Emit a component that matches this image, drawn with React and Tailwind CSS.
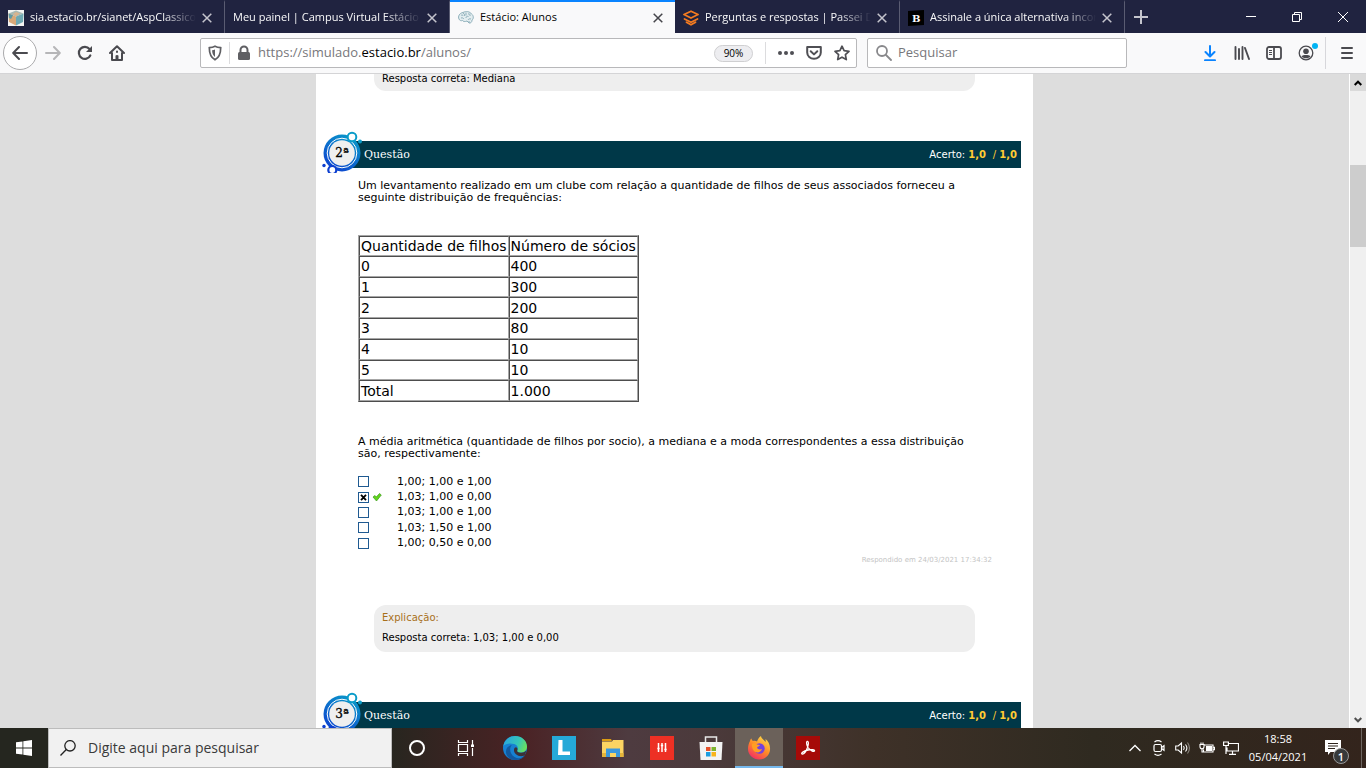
const tabs = [
  { title: "sia.estacio.br/sianet/AspClassico", icon: "cube" },
  { title: "Meu painel | Campus Virtual Estácio" },
  { title: "Estácio: Alunos", icon: "brain", active: true },
  { title: "Perguntas e respostas | Passei Direto", icon: "passei" },
  { title: "Assinale a única alternativa incorreta", icon: "brainly" },
];

const rows = [
  ["0", "400"],
  ["1", "300"],
  ["2", "200"],
  ["3", "80"],
  ["4", "10"],
  ["5", "10"],
  ["Total", "1.000"],
];

const options = [
  { text: "1,00; 1,00 e 1,00" },
  { text: "1,03; 1,00 e 0,00", checked: true },
  { text: "1,03; 1,00 e 1,00" },
  { text: "1,03; 1,50 e 1,00" },
  { text: "1,00; 0,50 e 0,00" },
];

const favicons = {
  cube: (
    <svg className="h-4 w-4 shrink-0" viewBox="0 0 16 16">
      <path fill="#f4f4f2" d="M0 0h16v16H0z" />
      <path fill="#a8b9b4" d="M8 0.5l7.5 3L8 6.5.5 3.5z" />
      <path fill="#d9a878" d="M.5 3.5L8 6.5v9L1 12z" />
      <path fill="#6fa9b3" d="M15.5 3.5L8 6.5v9l7-3.5z" />
      <path fill="#5f9aa6" d="M.5 3.5L5 5.3 3 9 1 8z" />
      <path fill="#d8b48f" d="M8 2l4 1.5L8 6.500 5 4z" />
    </svg>
  ),
  brain: (
    <svg className="h-4 w-4 shrink-0" viewBox="0 0 16 16" fill="none" stroke="#8fb0bb" strokeWidth="1">
      <path fill="#e3edf0" d="M1 9C-.3 6.500 1.500 3 5 2.500 8 .8 12 1.500 13.500 4c2.300 1.300 2.300 5 .5 6 .2 2-1.500 3.500-3 3L9 11c-2 1-4 .5-4.500-.5C3 11 1.500 10.500 1 9z" />
      <path d="M3 5.500c1-1 2-.5 2 .5M5 3.500c1.500 0 2 1 1.500 2.500M8 2.500v3M3 8c1.500-.5 2 0 3 1M8 8c0-1.500 1-2 2.500-1.500M10 4c1.500-.5 2.500.5 2 2M10 10c.5-1 1.500-1.500 3-1M11 11v2" />
    </svg>
  ),
  passei: (
    <svg className="h-4 w-4 shrink-0" viewBox="0 0 16 16" fill="none" stroke="#f47b20" strokeWidth="1.800" strokeLinejoin="round" strokeLinecap="round">
      <path d="M8 1.200L15 4.500 8 8 1 4.500z" />
      <path d="M1.500 9L8 12.200 14.500 9M3.500 12.200L8 14.800l4.500-2.600" />
    </svg>
  ),
  brainly: (
    <svg className="h-4 w-4 shrink-0" viewBox="0 0 16 16">
      <path fill="#000" d="M0 1L16 0v15L0 16z" />
      <text x="4" y="12" fontSize="10" fontWeight="bold" fontFamily="DejaVu Serif, serif" fill="#fff">B</text>
    </svg>
  ),
};

const Cross = ({ className }) => (
  <svg className={className} viewBox="0 0 10 10" fill="none" stroke="currentColor" strokeWidth="1.500">
    <path d="M.7.7l8.600 8.600M9.300.7L.7 9.300" />
  </svg>
);

const Tab = ({ title, icon, active }) => (
  <div
    className={
      active
        ? "flex h-full min-w-0 max-w-[225px] flex-1 items-center gap-1.5 border-t-2 border-[#0a84ff] bg-[#f9f9fa] pr-3 pl-2 text-black"
        : "flex h-full min-w-0 max-w-[225px] flex-1 items-center gap-1.5 border-t-2 border-r border-t-transparent border-r-[#5a5c72] pr-3 pl-2 text-[#f9f9fa]"
    }
  >
    {icon && favicons[icon]}
    <span
      className={
        active
          ? "flex-1 overflow-hidden whitespace-nowrap"
          : "flex-1 overflow-hidden mask-r-from-80% whitespace-nowrap"
      }
    >
      {title}
    </span>
    <button aria-label="Fechar aba">
      <Cross className={active ? "h-2.5 w-2.5 text-[#45454a]" : "h-2.5 w-2.5 text-[#c5c5cd]"} />
    </button>
  </div>
);

const TabBar = () => (
  <div className="flex h-[33px] shrink-0 items-center bg-[#202340] font-['Open_Sans',sans-serif] text-[11px]">
    {tabs.map((tab) => (
      <Tab key={tab.title} {...tab} />
    ))}
    <button aria-label="Nova aba" className="flex w-8 justify-center">
      <svg className="h-4 w-4" viewBox="0 0 16 16" stroke="#c5c5cd" strokeWidth="2">
        <path d="M8 1v14M1 8h14" />
      </svg>
    </button>
    <div className="ml-auto flex text-white">
      <button aria-label="Minimizar" className="flex w-[46px] justify-center">
        <svg className="h-2.5 w-2.5" viewBox="0 0 10 10" stroke="currentColor"><path d="M0 4.500h10" /></svg>
      </button>
      <button aria-label="Restaurar" className="flex w-[46px] justify-center">
        <svg className="h-2.5 w-2.5" viewBox="0 0 10 10" fill="none" stroke="currentColor">
          <path d="M.5 2.500h7v7h-7zM2.500 2.500v-2h7v7h-2" />
        </svg>
      </button>
      <button aria-label="Fechar" className="flex w-[46px] justify-center">
        <svg className="h-2.5 w-2.5" viewBox="0 0 10 10" stroke="currentColor"><path d="M0 0l10 10M10 0L0 10" /></svg>
      </button>
    </div>
  </div>
);

const Toolbar = () => (
  <div className="flex h-[41px] shrink-0 items-center border-b border-[#d4d4d6] bg-[#f9f9fa] pr-[11px] pl-[3px] font-['Open_Sans',sans-serif] text-[#4a4a4f]">
    <button aria-label="Voltar" className="flex h-[34px] w-[34px] items-center justify-center rounded-full border border-[#aaaaac] bg-white">
      <svg className="h-4 w-4" viewBox="0 0 16 16" fill="none" stroke="currentColor" strokeWidth="2" strokeLinecap="round" strokeLinejoin="round">
        <path d="M15 8H1.500M7 2L1.200 8 7 14" />
      </svg>
    </button>
    <button aria-label="Avançar" className="ml-2 text-[#b6b6b8]">
      <svg className="h-4 w-4" viewBox="0 0 16 16" fill="none" stroke="currentColor" strokeWidth="2" strokeLinecap="round" strokeLinejoin="round">
        <path d="M1 8h13.500M9 2l5.800 6L9 14" />
      </svg>
    </button>
    <button aria-label="Recarregar" className="ml-4">
      <svg className="h-4 w-4" viewBox="0 0 16 16" fill="none" stroke="currentColor" strokeWidth="2.200" strokeLinecap="round">
        <path d="M13.300 10.500A6 6 0 1 1 12.500 4" />
        <path d="M15 1v6H9z" fill="currentColor" stroke="none" />
      </svg>
    </button>
    <button aria-label="Página inicial" className="ml-4">
      <svg className="h-4 w-4" viewBox="0 0 16 16" fill="none" stroke="currentColor" strokeWidth="2" strokeLinecap="round" strokeLinejoin="round">
        <path d="M1 8l7-6.800L15 8M3 8v7h10V8" />
        <path d="M6.500 15v-4.500h3V15z" fill="currentColor" stroke="none" />
        <path d="M8 6.500v.5M8 11v3" />
      </svg>
    </button>

    <div className="ml-[75px] flex h-[30px] flex-1 items-center rounded-xs border border-[#b8b8ba] bg-white px-1.5">
      <svg className="h-4 w-4" viewBox="0 0 16 16" fill="none" stroke="#5f5f63" strokeWidth="1.700">
        <path d="M8 1.200C6.500 2 4.500 2.500 2.300 2.700c0 5.300 1.200 9.600 5.700 12 4.500-2.400 5.700-6.700 5.700-12C11.500 2.500 9.500 2 8 1.200z" />
        <path d="M8 4.500v7.500C5.800 10.400 5.200 8 5.100 5.300 6.200 5.200 7.200 4.900 8 4.500z" fill="#5f5f63" stroke="none" />
      </svg>
      <span className="ml-1.5 h-[22px] w-px bg-[#dcdcde]" />
      <svg className="ml-1.5 h-4 w-4" viewBox="0 0 16 16" fill="none" stroke="#5f5f63" strokeWidth="2">
        <path d="M4.500 8V5a3.500 3.500 0 0 1 7 0v3" />
        <rect x="2" y="7" width="12" height="8" rx="1.500" fill="#5f5f63" stroke="none" />
      </svg>
      <a href="https://simulado.estacio.br/alunos/" className="ml-1.5 text-[13px] text-[#77777b]">
        https://simulado.<span className="text-black">estacio.br</span>/alunos/
      </a>
      <button className="ml-auto h-[17px] w-[39px] rounded-full border border-[#cfcfd1] bg-[#ededf0] text-[10px] leading-[15px] text-black">90%</button>
      <span className="ml-3 h-[22px] w-px bg-[#dcdcde]" />
      <button aria-label="Ações da página" className="ml-3">
        <svg className="h-4 w-4" viewBox="0 0 16 16" fill="#4f4f54">
          <circle cx="2" cy="8" r="2" /><circle cx="8" cy="8" r="2" /><circle cx="14" cy="8" r="2" />
        </svg>
      </button>
      <button aria-label="Salvar no Pocket" className="ml-3">
        <svg className="h-4 w-4" viewBox="0 0 16 16" fill="none" stroke="#4f4f54" strokeWidth="2" strokeLinecap="round" strokeLinejoin="round">
          <path d="M1.200 2h13.600v5.500a6.800 6.300 0 0 1-13.600 0z" /><path d="M4.700 6.200L8 9.400l3.300-3.200" />
        </svg>
      </button>
      <button aria-label="Favoritar" className="ml-3">
        <svg className="h-4 w-4" viewBox="0 0 16 16" fill="none" stroke="#4f4f54" strokeWidth="1.700" strokeLinejoin="round">
          <path d="M8 1.200l2.100 4.500 4.900.6-3.600 3.400.9 4.900L8 12.200l-4.300 2.400.9-4.900L1 6.300l4.900-.6z" />
        </svg>
      </button>
    </div>

    <label className="ml-2.5 flex h-[30px] w-[260px] items-center gap-1.5 rounded-xs border border-[#b8b8ba] bg-white px-2">
      <svg className="h-4 w-4 shrink-0" viewBox="0 0 16 16" fill="none" stroke="#88888b" strokeWidth="1.800" strokeLinecap="round">
        <circle cx="6" cy="6" r="5" /><path d="M10 10l5 5" />
      </svg>
      <input aria-label="Pesquisar" placeholder="Pesquisar" className="w-full min-w-0 bg-transparent text-[13px] outline-none placeholder:text-[#77777b]" />
    </label>

    <div className="ml-[75px] flex items-center gap-4">
      <button aria-label="Downloads">
        <svg className="h-4 w-4" viewBox="0 0 16 16" fill="none" stroke="#0a84ff" strokeWidth="2" strokeLinecap="round" strokeLinejoin="round">
          <path d="M8 1v10M3.500 7L8 11.500 12.500 7M3 15.200h10" />
        </svg>
      </button>
      <button aria-label="Biblioteca">
        <svg className="h-4 w-4" viewBox="0 0 16 16" stroke="currentColor" strokeWidth="1.900" strokeLinecap="round">
          <path d="M1.500 2v12M5 4v10M8.500 2v12M11 3l4 11" />
        </svg>
      </button>
      <button aria-label="Barra lateral">
        <svg className="h-4 w-4" viewBox="0 0 16 16" fill="none" stroke="currentColor" strokeWidth="1.800">
          <rect x="1" y="2" width="14" height="12" rx="2" />
          <path d="M8 2v12" />
          <path strokeWidth="1" d="M3 5.500h3M3 7.500h3M3 9.500h3" />
        </svg>
      </button>
      <button aria-label="Conta" className="relative">
        <svg className="h-4 w-4" viewBox="0 0 16 16" fill="none" stroke="currentColor" strokeWidth="1.300">
          <circle cx="8" cy="8" r="6.800" />
          <circle cx="8" cy="6.300" r="2.800" fill="currentColor" stroke="none" />
          <path d="M3.500 11.300c1.500-1.800 7.500-1.800 9 0-1.800 2.700-7.200 2.700-9 0z" fill="currentColor" stroke="none" />
        </svg>
        <span className="absolute -top-0.5 -right-1 h-1.5 w-1.5 rounded-full bg-[#00b3f4]" />
      </button>
    </div>
    <span className="ml-[11px] h-8 w-px bg-[#d7d7db]" />
    <button aria-label="Menu" className="ml-[13px]">
      <svg className="h-4 w-4" viewBox="0 0 16 16" stroke="currentColor" strokeWidth="2" strokeLinecap="round">
        <path d="M3 3h10M3 8h10M3 13h10" />
      </svg>
    </button>
  </div>
);

const QuestionHeader = ({ number }) => (
  <div className="relative mr-3 ml-[30px] flex h-[27px] shrink-0 items-center justify-between bg-[#003848] pr-1 pl-[18px] text-white">
    {/* numbered bubble */}
    <svg className="absolute -top-2.5 -left-6 h-[42px] w-10" viewBox="0 0 40 42">
      <defs>
        <linearGradient id={"bubble" + number} x1="0.800" y1="0" x2="0.200" y2="1">
          <stop offset="0" stopColor="#0a9cc9" />
          <stop offset="1" stopColor="#0d3fd0" />
        </linearGradient>
      </defs>
      <circle cx="20" cy="22" r="18.500" fill={"url(#bubble" + number + ")"} />
      <circle cx="20" cy="22" r="14.800" fill="none" stroke="#fff" strokeWidth="1" />
      <circle cx="20" cy="22" r="12.800" fill="#efefef" />
      <circle cx="30" cy="6" r="4.300" fill="#fff" stroke="#0a9cc9" strokeWidth="2" />
      <circle cx="38" cy="10.500" r="2" fill="#0a9cc9" />
      <circle cx="10.300" cy="39" r="4" fill="#fff" stroke="#0d3fd0" strokeWidth="2.200" />
      <circle cx="2" cy="34.500" r="1.700" fill="#0d3fd0" />
      <text x="20" y="26" textAnchor="middle" fontSize="12" fontFamily="DejaVu Serif, serif" fill="#000" stroke="#000" strokeWidth="0.300">
        {number}ª
      </text>
    </svg>
    <h2 className="pt-0.5 font-['DejaVu_Serif',serif] text-[11px]">Questão</h2>
    <p className="text-[10px] whitespace-pre">
      Acerto: <b className="text-[#fc3]">1,0 </b> <span className="text-[#fc3]">/</span> <b className="text-[#fc3]">1,0</b>
    </p>
  </div>
);

const Page = () => (
  <main className="mx-auto flex w-full max-w-[717px] flex-col overflow-hidden bg-white font-['DejaVu_Sans',Verdana,sans-serif] text-black">
    <div className="mx-[58px] h-[17px] shrink-0 rounded-b-xl bg-[#eee] px-2 text-[10px] leading-2.5">Resposta correta: Mediana</div>
    <div className="h-[50px] shrink-0" />
    <QuestionHeader number={2} />

    <section className="shrink-0 px-[42px] pt-3 text-[11px] leading-3">
      <p>
        Um levantamento realizado em um clube com relação a quantidade de filhos de seus associados forneceu a
        <br />
        seguinte distribuição de frequências:
      </p>
      <table className="mt-[31px] h-[167px] w-[280px] border-separate border-spacing-0 border border-t-[#a6a6a6] border-r-[#4d4d4d] border-b-[#4d4d4d] border-l-[#a6a6a6] text-left text-sm leading-4">
        <thead>
          <tr>
            <th className="w-[148px] border border-t-[#4d4d4d] border-r-[#a6a6a6] border-b-[#a6a6a6] border-l-[#4d4d4d] p-px font-normal whitespace-nowrap">Quantidade de filhos</th>
            <th className="border border-t-[#4d4d4d] border-r-[#a6a6a6] border-b-[#a6a6a6] border-l-[#4d4d4d] p-px font-normal whitespace-nowrap">Número de sócios</th>
          </tr>
        </thead>
        <tbody>
          {rows.map((row) => (
            <tr key={row[0]}>
              {row.map((cell, i) => (
                <td key={i} className="border border-t-[#4d4d4d] border-r-[#a6a6a6] border-b-[#a6a6a6] border-l-[#4d4d4d] p-px">{cell}</td>
              ))}
            </tr>
          ))}
        </tbody>
      </table>
      <p className="mt-[34px]">
        A média aritmética (quantidade de filhos por socio), a mediana e a moda correspondentes a essa distribuição
        <br />
        são, respectivamente:
      </p>
      <div className="mt-3.5 grid h-[77px] grid-rows-5">
        {options.map((option) => (
          <label key={option.text} className="flex items-center">
            <span className="relative flex">
              <input type="checkbox" defaultChecked={option.checked} className="h-[11px] w-[11px] appearance-none border border-[#1f5a91] bg-white" />
              {option.checked && (
                <svg className="absolute inset-0 h-[11px] w-[11px]" viewBox="0 0 11 11" stroke="#000" strokeWidth="1.800">
                  <path d="M3 2.800l5 5.400M8 2.800L3 8.200" />
                </svg>
              )}
            </span>
            <span className="flex w-7 pl-[3px]">
              {option.checked && (
                <svg className="h-2.5 w-2.5" viewBox="0 0 10 10" fill="#62d51b" stroke="#3c9a1c" strokeWidth="0.700">
                  <path d="M1 5l2-1.500L4.300 5 7.500 1.500 9.300 3 4.500 9z" />
                </svg>
              )}
            </span>
            {option.text}
          </label>
        ))}
      </div>
    </section>
    <p className="mt-[5px] mr-[41px] shrink-0 text-right text-[7px] leading-2 text-[#c4c4c4]">Respondido em 24/03/2021 17:34:32</p>

    <section className="mx-[58px] mt-[41px] shrink-0 rounded-xl bg-[#eee] px-2 pt-[7px] pb-2 text-[10px] leading-3">
      <h3 className="text-[#a8701a]">Explicação:</h3>
      <p className="mt-2">Resposta correta: 1,03; 1,00 e 0,00</p>
    </section>
    <div className="h-[50px] shrink-0" />
    <QuestionHeader number={3} />
  </main>
);

const ScrollBar = () => (
  <div className="flex w-[17px] shrink-0 flex-col border-l border-white bg-[#f0f0f0]">
    <button aria-label="Rolar para cima" className="flex h-[17px] items-center justify-center bg-[#dadada]">
      <svg className="h-2 w-2" viewBox="0 0 8 8" fill="none" stroke="#000" strokeWidth="2"><path d="M.7 6L4 2.700 7.300 6" /></svg>
    </button>
    <div className="flex flex-1 flex-col">
      <div className="h-[12%]" />
      <div className="h-[82px] bg-[#cdcdcd]" />
    </div>
    <button aria-label="Rolar para baixo" className="flex h-[17px] items-center justify-center">
      <svg className="h-2 w-2" viewBox="0 0 8 8" fill="none" stroke="#505050" strokeWidth="2"><path d="M.7 2L4 5.300 7.300 2" /></svg>
    </button>
  </div>
);

const apps = [
  {
    name: "Cortana",
    art: <circle cx="12" cy="12" r="7" fill="none" stroke="#fff" strokeWidth="2" />,
  },
  {
    name: "Visão de tarefas",
    art: (
      <g fill="none" stroke="#fff" strokeWidth="1.200">
        <path d="M4.500 8.500h9v7h-9zM4.500 4v2.500h9V4M4.500 20v-2.500h9V20M18.500 4v5M18.500 12v8" />
        <path fill="#fff" stroke="none" d="M17 8.500h3V11h-3z" />
      </g>
    ),
  },
  {
    name: "Edge",
    art: (
      <g>
        <defs>
          <linearGradient id="edgeTop" x1="0" y1="0.300" x2="1" y2="0.600">
            <stop offset="0" stopColor="#2aa5dd" />
            <stop offset="0.600" stopColor="#35c6b8" />
            <stop offset="1" stopColor="#6ce05a" />
          </linearGradient>
        </defs>
        <circle cx="12" cy="12" r="12" fill="#1781d2" />
        <path d="M.3 10C1.500 3.800 6.300 0 12 0c7 0 12 5 12 10.500 0 4-3 6-6.300 6-2.700 0-4-1-3.500-2 1.500-2 .6-5.500-3-6.500C7 6.800 2.300 7.500.3 10z" fill="url(#edgeTop)" />
        <path d="M9 9c-3 2.500-2.500 9 2.500 12 4 2.300 8 1 10.500-1.500C19.500 23 16 24 12 24 6 24 2.500 19 3 15c.4-3.300 3-5.500 6-6z" fill="#12599f" />
        <path d="M14.200 14.500c-.5 1 1 2.200 3.800 2.200 2 0 4-.7 5.200-2.200-.2 2-.8 3.700-1.700 5-5 2-11-1-10.500-6 .3-1.500 1.500-2.500 2.500-2 1 .6 1.200 2 .7 3z" fill="#3c3136" />
      </g>
    ),
  },
  {
    name: "Lightshot",
    art: (
      <g>
        <path fill="#25a9d8" d="M0 0h24v24H0z" />
        <path fill="#114f7a" d="M6 19l5-2 8 2z" />
        <path fill="#fff" d="M6.500 4h4v11.500H18V19H6z" />
      </g>
    ),
  },
  {
    name: "Explorador de arquivos",
    art: (
      <g>
        <path fill="#dc9c13" d="M1 3h9l1 2H1z" />
        <path fill="#fcd462" d="M1 5.500h10L12 4h10.500v17H1z" />
        <path fill="#3c98dc" d="M5 12.500h14V21h-4v-4H9v4H5z" />
        <path fill="#e5b43a" d="M1 17h4v4H1zM19 17h3.500v4H19z" />
      </g>
    ),
  },
  {
    name: "Mixer",
    art: (
      <g>
        <path fill="#ed3024" d="M0 0h24v24H0z" />
        <path stroke="#fff" strokeWidth="1.500" d="M8.500 7v9M12 7v9M15.500 7v9M7.300 12.500h2.400M10.800 9.500h2.400M14.300 13.500h2.400" />
      </g>
    ),
  },
  {
    name: "Microsoft Store",
    art: (
      <g>
        <path d="M6.500 7V1h11v6" fill="none" stroke="#e8e8e8" strokeWidth="1.500" />
        <path fill="#f3f3f3" d="M.5 6h23l-1 18h-21z" />
        <path fill="#e5502b" d="M7 11h4.500v4H7z" />
        <path fill="#7cb42d" d="M12.500 11H17v4h-4.500z" />
        <path fill="#1b9de0" d="M7 16h4.500v4.500H7z" />
        <path fill="#f8b41b" d="M12.500 16H17v4.500h-4.500z" />
      </g>
    ),
  },
  {
    name: "Firefox",
    active: true,
    art: (
      <g>
        <defs>
          <linearGradient id="fox" x1="0.800" y1="0" x2="0.200" y2="1">
            <stop offset="0" stopColor="#ffe14a" />
            <stop offset="0.500" stopColor="#ff8a26" />
            <stop offset="1" stopColor="#f0256b" />
          </linearGradient>
        </defs>
        <path fill="url(#fox)" d="M3 5c.3-1.500 1-2.300 1.500-2.500 0 1 .5 1.700 1.500 2.500 2-.5 3 0 4 .5C11 3 12 1 14 0c0 3 3 3 4.500 6 .3-1 .2-2 0-3 3 2 5 6.500 4.500 11-.6 6-5.500 9.500-11 9.500S1 19 1 13c0-3 .8-6 2-8z" />
        <circle cx="12.500" cy="12.500" r="5.200" fill="#7542dc" />
        <path fill="#ff9e22" d="M5 8c2-1.500 4-1 5 .5l3 .5c-.3 1.300-2 1.500-3 2.500.5 2 3 2.500 5 1.500-1 3-4 4-6.500 3C6 15 4.500 11 5 8z" />
      </g>
    ),
  },
  {
    name: "Adobe Reader",
    art: (
      <g>
        <path fill="#a60a08" d="M0 0h24v24H0z" />
        <path fill="none" stroke="#fff" strokeWidth="1.300" d="M11 5.500c2-.5 1.500 3 .5 6-1.300 3.500-3.500 7-5.500 6.500-1.500-1 2.500-3.200 6-4 3.500-.7 7-.5 6.500 1-.8 1.300-5-1.200-6.500-3.500C10.800 9.500 10 6 11 5.500z" />
      </g>
    ),
  },
];

const TaskBar = () => (
  <footer className="flex h-10 shrink-0 items-center bg-linear-[90deg,#25261f_0%,#25261f_28%,#4a2224_38%,#4e3b40_46%,#4b3a3b_52%,#3e3128_64%,#2f2a20_80%,#33241c_100%] font-['Open_Sans',sans-serif] text-white">
    <button aria-label="Iniciar" className="flex w-12 justify-center">
      <svg className="h-4 w-4" viewBox="0 0 16 16" fill="#fff">
        <path d="M0 2.300L6.500 1.400v6.100H0zM7.300 1.300L16 0v7.500H7.300zM0 8.400h6.500v6.200L0 13.700zM7.300 8.400H16V16l-8.700-1.200z" />
      </svg>
    </button>
    <label className="flex h-10 w-[344px] items-center gap-3 border border-[#bcbcbc] bg-[#f1f1f1] px-[11px] text-[#333]">
      <svg className="h-4 w-4 shrink-0" viewBox="0 0 16 16" fill="none" stroke="#222" strokeWidth="1.300">
        <circle cx="10" cy="5.800" r="5.200" /><path d="M6.300 9.500L.5 15.500" />
      </svg>
      <input aria-label="Digite aqui para pesquisar" placeholder="Digite aqui para pesquisar" className="w-full min-w-0 bg-transparent text-sm outline-none placeholder:text-[#3a3a3a]" />
    </label>
    <div className="flex">
      {apps.map((app) => (
        <button
          key={app.name}
          aria-label={app.name}
          className={
            app.active
              ? "flex h-10 w-12 items-center justify-center border-y-2 border-t-transparent border-b-[#76b9ed] bg-[#6b615a]"
              : "flex h-10 w-[49px] items-center justify-center"
          }
        >
          <svg className="h-6 w-6" viewBox="0 0 24 24">{app.art}</svg>
        </button>
      ))}
    </div>
    <div className="ml-auto flex items-center gap-2">
      <svg className="h-4 w-4" viewBox="0 0 16 16" fill="none" stroke="#fff" strokeWidth="1.300"><path d="M2.500 11L8 5.500 13.500 11" /></svg>
      <svg className="h-4 w-4" viewBox="0 0 16 16" fill="none" stroke="#fff" strokeWidth="1.200">
        <rect x="3" y="4.500" width="7.500" height="7" rx="1.500" /><path d="M10.500 7.500l2.500-1.800v4.600l-2.500-1.800M3.500 2c2-1.500 5-1.500 7 0M3.500 14c2 1.500 5 1.500 7 0" />
      </svg>
      <svg className="h-4 w-4" viewBox="0 0 16 16" fill="none" stroke="#fff" strokeWidth="1.100">
        <path d="M.7 6h2.500L6.500 3v10L3.200 10H.7zM8.500 6c.9 1.200.9 2.800 0 4M10.500 4.500c1.600 2 1.600 5 0 7" /><path stroke="#8b857e" d="M12.500 2.500c2.500 3.500 2.500 7.500 0 11" />
      </svg>
      <svg className="h-4 w-4" viewBox="0 0 16 16" fill="none" stroke="#fff" strokeWidth="1.100">
        <path d="M5.500 5h8.500v7H4.500V9.500M14 7.200h1.500v2.600H14M1 4.500h4v2.200a2 2 0 0 1-4 0zM2 4.500v-2M4 4.500v-2M3 9v3h2" /><path fill="#fff" d="M7.500 6.500h5v4h-5z" />
      </svg>
      <svg className="h-4 w-4" viewBox="0 0 16 16" fill="none" stroke="#fff" strokeWidth="1.200">
        <path d="M6 3.500h9.500V11H4V7.500M9.500 11v3M6 14.400h7M.6 2h4.800v3.500H.6zM3 5.500V14" />
      </svg>
      <div className="w-[62px] text-center text-[11px] leading-[18px] whitespace-nowrap">
        <p>18:58</p>
        <p>05/04/2021</p>
      </div>
      <button aria-label="Notificações" className="relative ml-2 h-6 w-6">
        <svg className="h-4 w-4" viewBox="0 0 16 16">
          <path fill="#fff" d="M0 0h16v12H5.500L3 15v-3H0z" /><path stroke="#2e241d" strokeWidth="1.200" d="M3 3.500h10M3 6h10M3 8.500h7" />
        </svg>
        <span className="absolute right-0 -bottom-1 flex h-4 w-4 items-center justify-center rounded-full border border-[#999] bg-[#37393a] text-[11px] leading-none font-semibold">1</span>
      </button>
      <span className="mr-1 ml-1 h-10 w-px bg-[#6d6560]" />
    </div>
  </footer>
);

export default function App() {
  return (
    <div className="flex h-screen flex-col overflow-hidden bg-[#ddd]">
      <TabBar />
      <Toolbar />
      <div className="flex min-h-0 flex-1">
        <div className="flex min-w-0 flex-1">
          <Page />
        </div>
        <ScrollBar />
      </div>
      <TaskBar />
    </div>
  );
}
